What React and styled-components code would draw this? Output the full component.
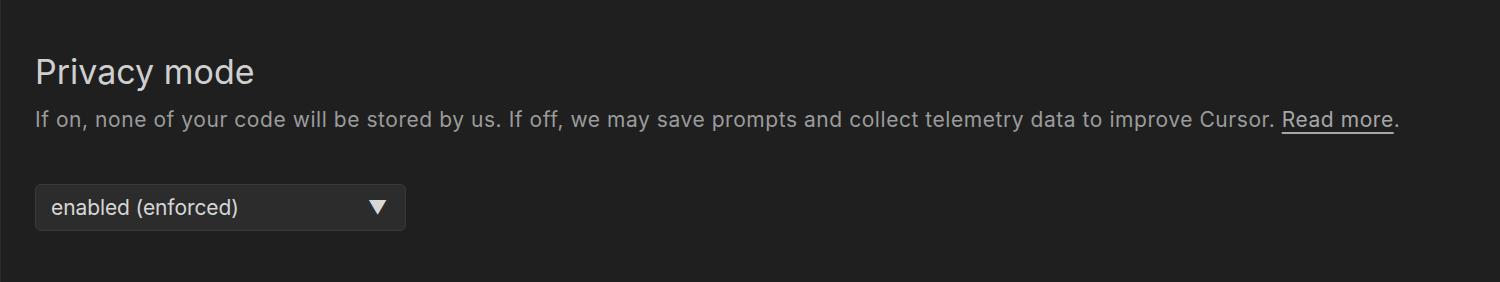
import React from "react";
import styled, { createGlobalStyle } from "styled-components";

const Global = createGlobalStyle`
  html, body { margin: 0; padding: 0; background: #1f1f1f; }
  * { box-sizing: border-box; }
`;

const Panel = styled.div`
  height: 282px;
  background: #1f1f1f;
  border-left: 1px solid #2c2c2c;
  padding: 50px 0 0 34px;
  font-family: Inter, "Liberation Sans", sans-serif;
  display: flex;
  flex-direction: column;
`;

const Title = styled.h1`
  margin: 0;
  font-size: 34px;
  line-height: 44px;
  font-weight: 400;
  color: #cfcfcf;
`;

const Description = styled.p`
  margin: 12px 0 0;
  font-size: 21px;
  line-height: 28px;
  letter-spacing: 0.55px;
  color: #9b9b9b;
`;

const Link = styled.a`
  color: #a6a6a6;
  text-decoration: underline;
  text-underline-offset: 5px;
  text-decoration-thickness: 2px;
  cursor: pointer;
`;

const Select = styled.div`
  margin-top: 50px;
  width: 371px;
  height: 47px;
  background: #2c2c2c;
  border: 1px solid #3a3a3a;
  border-radius: 6px;
  display: flex;
  align-items: center;
  justify-content: space-between;
  padding: 0 18px 0 15px;
  color: #d6d6d6;
  font-size: 21px;
  letter-spacing: -0.1px;
`;

const Arrow = styled.span`
  font-size: 19px;
  color: #d8d8d8;
`;

export default function App() {
  return (
    <>
      <Global />
      <Panel>
        <Title>Privacy mode</Title>
        <Description>
          If on, none of your code will be stored by us. If off, we may save prompts and collect telemetry data to improve Cursor. <Link>Read more</Link>.
        </Description>
        <Select>
          <span>enabled (enforced)</span>
          <Arrow>▼</Arrow>
        </Select>
      </Panel>
    </>
  );
}
